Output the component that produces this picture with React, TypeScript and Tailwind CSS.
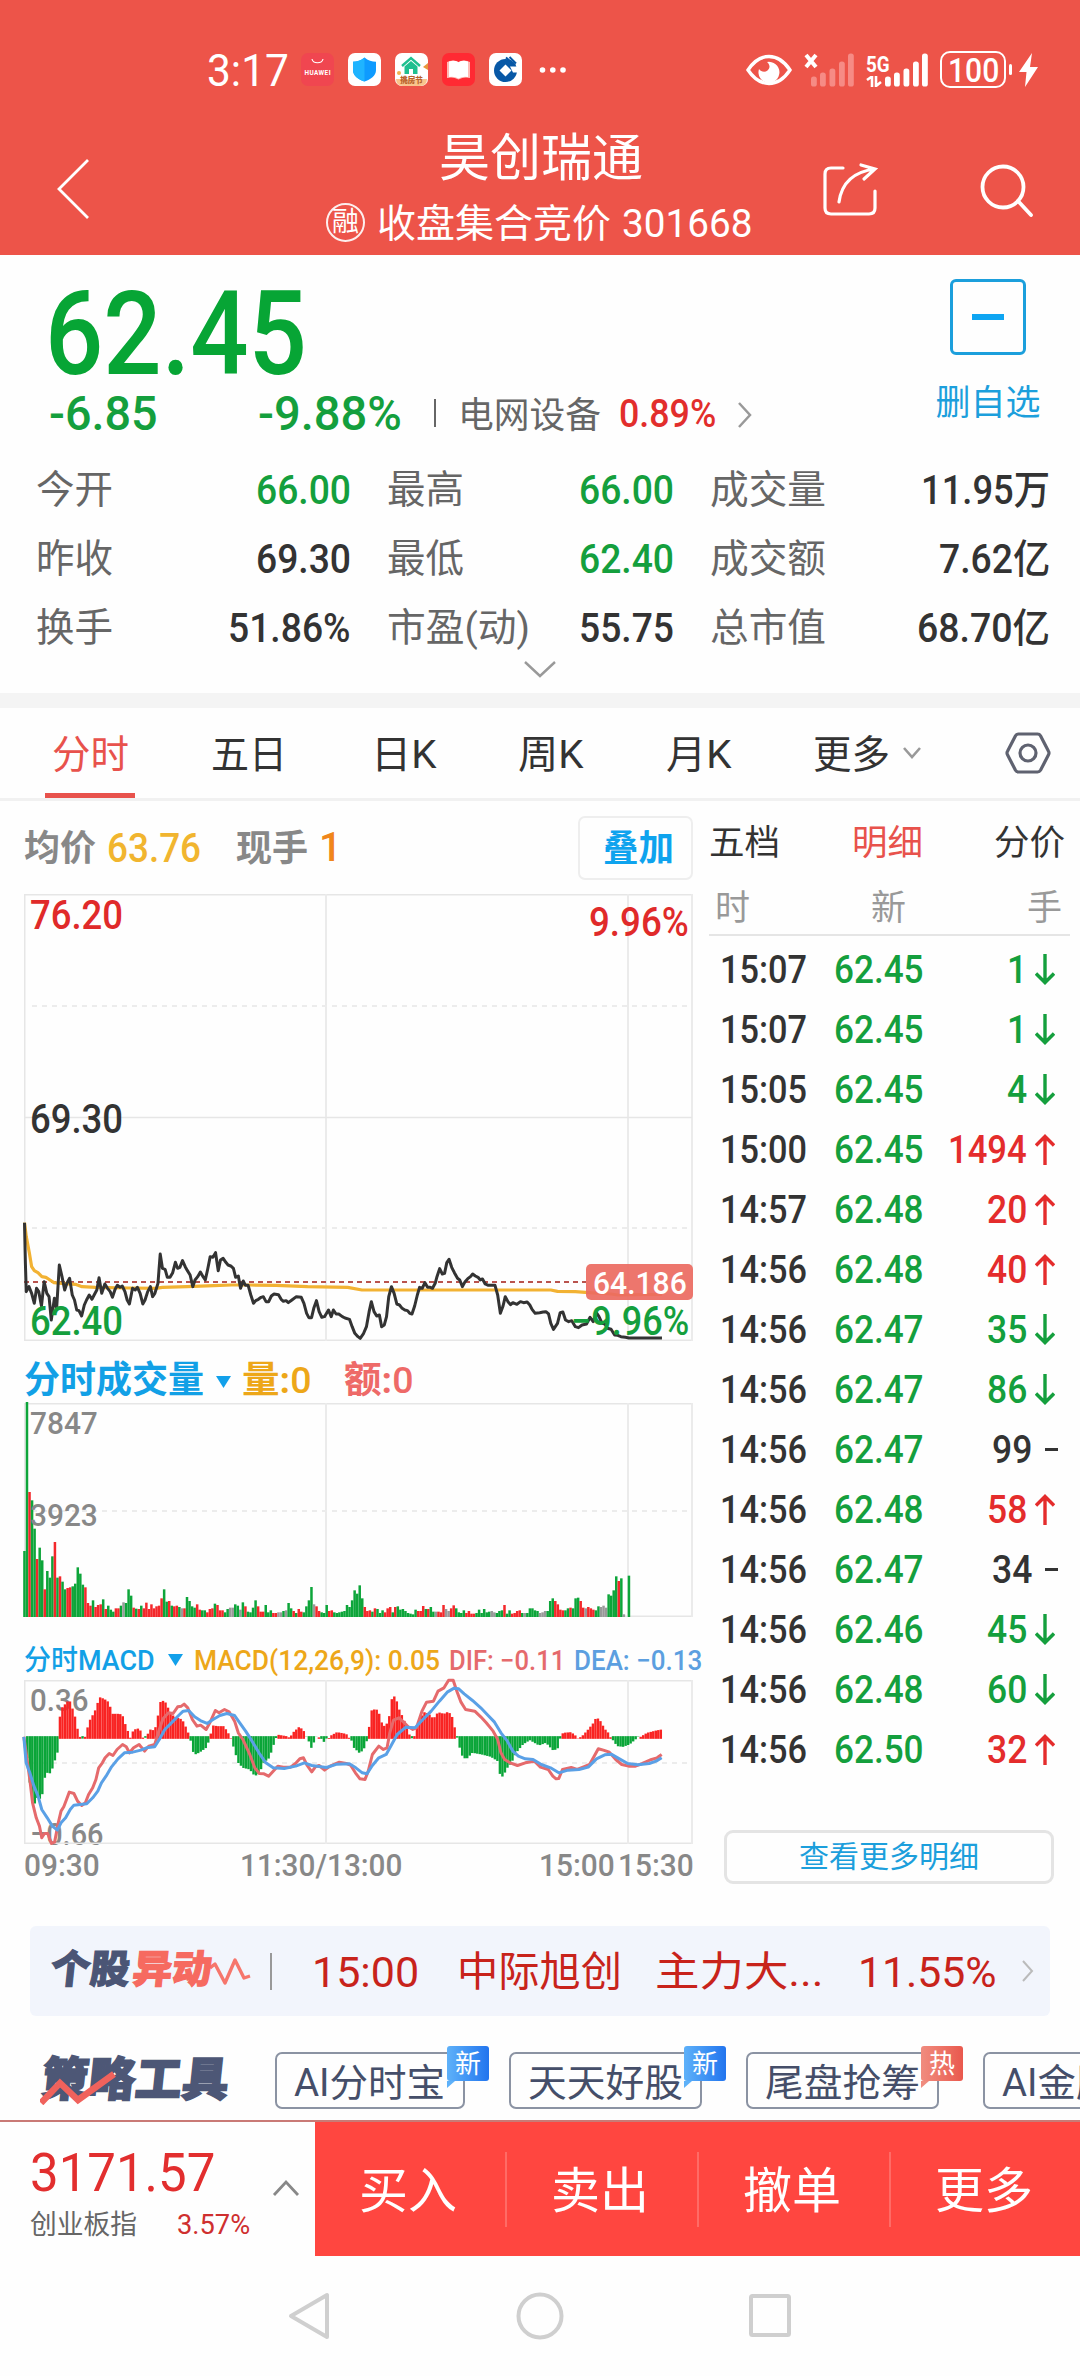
import { useLayoutEffect, useRef, useState } from "react";
import type { ReactNode } from "react";
import clsx from "clsx";

interface FitProps {
  children: ReactNode;
  className?: string;
}

// Squeezes or stretches a single line of text to the width of its box
function Fit({ children, className }: FitProps) {
  const box = useRef<HTMLSpanElement>(null);
  const text = useRef<HTMLSpanElement>(null);
  const [scale, setScale] = useState(1);

  useLayoutEffect(() => {
    if (box.current && text.current) {
      setScale(box.current.clientWidth / text.current.offsetWidth);
    }
  }, [children]);

  return (
    <span ref={box} className={clsx("block shrink-0 whitespace-nowrap leading-none", className)}>
      <span ref={text} className="inline-block origin-left translate-y-px" style={{ transform: `scaleX(${scale})` }}>
        {children}
      </span>
    </span>
  );
}

const SIGNAL = [
  { x: 0, h: 10 },
  { x: 9, h: 14 },
  { x: 18.5, h: 18 },
  { x: 28, h: 25 },
  { x: 37, h: 33 },
];

function SignalBars({ className }: { className?: string }) {
  return (
    <svg width="43" height="34" viewBox="0 0 43 34" className={className}>
      {SIGNAL.map((b) => (
        <rect key={b.x} x={b.x} y={33.5 - b.h} width="5.8" height={b.h} rx="2.6" fill="currentColor" />
      ))}
    </svg>
  );
}

function StatusBar() {
  return (
    <div className="flex h-[120px] items-center pt-[19px] pl-[207px]">
      <Fit className="w-[82px] text-[44px]">3:17</Fit>
      <div className="ml-3 flex gap-[14px]">
        <svg width="33" height="33" viewBox="0 0 33 33">
          <rect width="33" height="33" rx="7" fill="#f04650" />
          <path d="M11 6c1 5 10 5 11 0" fill="none" stroke="#fff" strokeWidth="1.2" />
          <text x="16.5" y="21.5" fontSize="6.4" fontWeight="700" fill="#fff" textAnchor="middle" textLength="26">
            HUAWEI
          </text>
        </svg>
        <svg width="33" height="33" viewBox="0 0 33 33">
          <rect width="33" height="33" rx="7" fill="#fff" />
          <path d="M16.5 4.500c3.500 3 7.500 4 11.500 4.300v8.200c0 6-5.500 9.500-11.500 11.500C10.500 26.500 5 23 5 17V8.800c4-.3 8-1.300 11.500-4.300z" fill="#0e9bff" />
          <path d="M16.500 4.500c-3.500 3-7.500 4-11.500 4.300V17c0 6 5.500 9.500 11.500 11.500z" fill="#1fb4ff" />
        </svg>
        <svg width="33" height="33" viewBox="0 0 33 33">
          <rect width="33" height="33" rx="7" fill="#fff" />
          <path d="M1 26h31q0 7-7 7H8q-7 0-7-7z" fill="#f9c48c" />
          <circle cx="4" cy="20" r="2" fill="#f2b24f" />
          <path d="M28 14l5-4v7z" fill="#e9973c" />
          <path d="M7 13l9-8 9 8" fill="none" stroke="#1fbf8f" strokeWidth="2.400" />
          <path d="M9.500 13.500l6.500-5.500 6.500 5.500V21h-4.500v-5h-4v5H9.500z" fill="#1fbf8f" />
          <text x="16.500" y="29.800" fontSize="7.500" fontWeight="900" fill="#b8602a" textAnchor="middle">
            挑房节
          </text>
        </svg>
        <svg width="33" height="33" viewBox="0 0 33 33">
          <rect width="33" height="33" rx="7" fill="#ff2a33" />
          <path d="M5 9q6-3 11.500 0 5.500-3 11.500 0v16q-6-1.500-11.500 1.500Q11 23.500 5 25z" fill="#ffb9b4" />
          <path d="M7 8.500q5.500-1.800 9.500.7 4-2.500 9.500-.7V24q-5.500-1-9.500 1.500Q12.500 23 7 24z" fill="#fff" />
        </svg>
        <svg width="33" height="33" viewBox="0 0 33 33">
          <rect width="33" height="33" rx="7" fill="#fff" />
          <circle cx="16.500" cy="17.500" r="11.500" fill="#0758a6" />
          <path d="M16.500 11.500l6 6-6 6-6-6z" fill="#fff" />
          <path d="M21 13.500h9v6h-6z" fill="#fff" />
          <path d="M17 4.500l9 8M20.500 4l6.500 6.500" stroke="#0758a6" strokeWidth="2" />
        </svg>
      </div>
      <svg className="ml-[17px]" width="28" height="8" viewBox="0 0 28 8" fill="#fff">
        <circle cx="3.500" cy="4" r="2.800" />
        <circle cx="13.800" cy="4" r="2.800" />
        <circle cx="24" cy="4" r="2.800" />
      </svg>
      <svg className="ml-[179px]" width="46" height="32" viewBox="0 0 46 32">
        <path d="M2 16Q11 2.500 23 2.500T44 16Q35 29.500 23 29.500T2 16z" fill="none" stroke="#fff" strokeWidth="3.400" />
        <path d="M21 8a10.500 10.500 0 1 1-8 7c2 3 6 3.500 8.500 1.500 3-2.500 2.500-6-.5-8.500z" fill="#fff" />
      </svg>
      <div className="ml-3 flex h-[34px] w-[50px]">
        <svg className="-mr-[7px] shrink-0" width="14" height="16" viewBox="0 0 14 16">
          <path d="M2 2l10 12M12 2L2 14" stroke="#fff" strokeWidth="4" />
        </svg>
        <SignalBars className="shrink-0 text-[#f68b85]" />
      </div>
      <div className="ml-3 flex h-[34px]">
        <div className="flex w-[19px] flex-col justify-between">
          <Fit className="w-[24px] text-[22px] font-bold">5G</Fit>
          <svg width="17" height="11" viewBox="0 0 17 11" stroke="#fff" strokeWidth="2.600" fill="none">
            <path d="M1 4l5-3.500V11M10 0v10l5-4" />
          </svg>
        </div>
        <SignalBars className="text-white" />
      </div>
      <div className="ml-3 flex h-[37px] w-[66px] items-center justify-center rounded-[10px] border-[2.500px] border-white">
        <Fit className="w-[51px] text-[33px] font-medium">100</Fit>
      </div>
      <div className="ml-[3px] h-[11px] w-[3px] rounded-full bg-white" />
      <svg className="ml-[7px]" width="19" height="34" viewBox="0 0 19 34">
        <path d="M13 0L0 19h7.500L6 34l13-20h-8z" fill="#fff" />
      </svg>
    </div>
  );
}

function Header() {
  return (
    <header className="h-[255px] bg-[#ed5449] text-white">
      <StatusBar />
      <div className="flex h-[135px]">
        <svg className="mt-[38px] ml-[56px] shrink-0" width="34" height="62" viewBox="0 0 34 62">
          <path d="M32 2L3 31l29 29" fill="none" stroke="#fff" strokeWidth="2.800" />
        </svg>
        <div className="ml-[236px] w-[430px] shrink-0">
          <Fit className="mt-[12px] ml-[113px] w-[204px] text-[51px]">昊创瑞通</Fit>
          <div className="mt-[19px] flex h-[40px] items-center">
            <div className="flex size-[39px] shrink-0 items-center justify-center rounded-full border-2 border-white/90">
              <span className="text-[27px] leading-none">融</span>
            </div>
            <Fit className="mt-[2px] ml-[12px] w-[234px] text-[39px]">收盘集合竞价</Fit>
            <Fit className="mt-[2px] ml-[11px] w-[131px] text-[39px]">301668</Fit>
          </div>
        </div>
        <svg className="mt-[42px] ml-[67px] shrink-0" width="56" height="56" viewBox="0 0 56 56" fill="none" stroke="#fff" strokeWidth="3.200" strokeLinecap="round">
          <path d="M20 6H8q-6 0-6 6v34q0 6 6 6h38q6 0 6-6V29" />
          <path d="M16 40Q20 11 52 7M38 3l14 4-11 10" />
        </svg>
        <svg className="mt-[42px] ml-[101px] shrink-0" width="54" height="56" viewBox="0 0 54 56" fill="none" stroke="#fff" strokeWidth="3.800" strokeLinecap="round">
          <circle cx="23" cy="25" r="20.500" />
          <path d="M38 39l13 14" />
        </svg>
      </div>
    </header>
  );
}

interface Stat {
  label: string;
  labelWidth: string;
  value: string;
  valueWidth: string;
  down?: boolean;
}

const STATS: Stat[][] = [
  [
    { label: "今开", labelWidth: "w-[77px]", value: "66.00", valueWidth: "w-[95px]", down: true },
    { label: "最高", labelWidth: "w-[77px]", value: "66.00", valueWidth: "w-[95px]", down: true },
    { label: "成交量", labelWidth: "w-[116px]", value: "11.95万", valueWidth: "w-[129px]" },
  ],
  [
    { label: "昨收", labelWidth: "w-[77px]", value: "69.30", valueWidth: "w-[95px]" },
    { label: "最低", labelWidth: "w-[77px]", value: "62.40", valueWidth: "w-[95px]", down: true },
    { label: "成交额", labelWidth: "w-[116px]", value: "7.62亿", valueWidth: "w-[111px]" },
  ],
  [
    { label: "换手", labelWidth: "w-[77px]", value: "51.86%", valueWidth: "w-[123px]" },
    { label: "市盈(动)", labelWidth: "w-[143px]", value: "55.75", valueWidth: "w-[95px]" },
    { label: "总市值", labelWidth: "w-[116px]", value: "68.70亿", valueWidth: "w-[133px]" },
  ],
];

function Quote() {
  return (
    <section className="h-[438px]">
      <div className="flex h-[200px]">
        <div className="w-[900px]">
          <Fit className="mt-[20px] ml-[45px] w-[262px] text-[116px] font-medium text-[#07a535]">62.45</Fit>
          <div className="-mt-[3px] flex h-[50px] items-center">
            <Fit className="ml-[49px] w-[109px] text-[48px] font-medium text-[#149f3d]">-6.85</Fit>
            <Fit className="ml-[100px] w-[144px] text-[48px] font-medium text-[#149f3d]">-9.88%</Fit>
            <div className="ml-[32px] h-[28px] w-[2px] bg-[#666]" />
            <Fit className="mt-[3px] ml-[22px] w-[143px] text-[36px] text-[#666]">电网设备</Fit>
            <Fit className="ml-[18px] w-[97px] text-[38px] font-medium text-[#e22e2c]">0.89%</Fit>
            <svg className="mt-[4px] ml-[21px]" width="16" height="28" viewBox="0 0 16 28">
              <path d="M2 2l11 12L2 26" fill="none" stroke="#999" strokeWidth="2.500" />
            </svg>
          </div>
        </div>
        <div className="ml-[35px] flex w-[106px] flex-col items-center text-[#1c9fdc]">
          <div className="mt-[24px] flex size-[76px] items-center justify-center rounded-[6px] border-[3px] border-[#1c9fdc]">
            <div className="h-[6px] w-[32px] bg-[#0ea5f2]" />
          </div>
          <Fit className="mt-[30px] w-[105px] text-[35px]">删自选</Fit>
        </div>
      </div>
      <div className="flex flex-col">
        {STATS.map((row, i) => (
          <div key={i} className="flex h-[69px] items-center text-[40px]">
            {row.map((s, j) => (
              <div
                key={s.label}
                className={clsx(
                  "flex items-center justify-between",
                  j === 0 && "ml-[36px] w-[315px]",
                  j === 1 && "ml-[36px] w-[287px]",
                  j === 2 && "ml-[36px] w-[340px]",
                )}
              >
                <Fit className={clsx("text-[39px] text-[#666]", s.labelWidth)}>{s.label}</Fit>
                <Fit className={clsx(s.valueWidth, s.down ? "font-medium text-[#149f3d]" : "font-medium text-[#333]")}>{s.value}</Fit>
              </div>
            ))}
          </div>
        ))}
      </div>
      <svg className="-mt-[2px] mx-auto" width="34" height="18" viewBox="0 0 34 18">
        <path d="M2 2l15 14L32 2" fill="none" stroke="#999" strokeWidth="2.400" />
      </svg>
    </section>
  );
}

function ChartTabs() {
  return (
    <nav className="flex h-[93px] items-center border-b-[3px] border-[#f1f1f1] text-[39px] text-[#333]">
      <div className="ml-[45px] flex h-[90px] w-[90px] shrink-0 items-center justify-center border-b-[5px] border-[#e8524c] pt-[7px] text-[#e8524c]">
        <Fit className="w-[77px]">分时</Fit>
      </div>
      <Fit className="mt-[2px] ml-[76px] w-[76px]">五日</Fit>
      <Fit className="mt-[2px] ml-[84px] w-[65px]">日K</Fit>
      <Fit className="mt-[2px] ml-[82px] w-[65px]">周K</Fit>
      <Fit className="mt-[2px] ml-[83px] w-[65px]">月K</Fit>
      <Fit className="mt-[2px] ml-[82px] w-[77px]">更多</Fit>
      <svg className="ml-[12px]" width="20" height="14" viewBox="0 0 20 14">
        <path d="M2 2l8 9 8-9" fill="none" stroke="#999" strokeWidth="2.600" />
      </svg>
      <svg className="ml-[83px]" width="46" height="44" viewBox="0 0 46 44" fill="none" stroke="#5f6270" strokeWidth="3.200" strokeLinejoin="round">
        <path d="M13.500 3h19q2 0 3 1.700l8 15.500q1 1.800 0 3.600l-8 15.500q-1 1.700-3 1.700h-19q-2 0-3-1.700l-8-15.500q-1-1.800 0-3.600l8-15.500q1-1.700 3-1.700z" />
        <circle cx="23" cy="22" r="8" />
      </svg>
    </nav>
  );
}

// Traces are plotted in chart units and scaled into the panel by the group around them
const PRICE =
  "56,128 58,250 60,335 66,320 72,340 78,370 83,325 88,335 94,378 100,305 106,340 111,350 116,420 123,355 128,385 134,255 140,290 146,330 151,310 157,295 163,345 168,360 173,390 178,392 184,408 190,375 195,360 201,345 207,358 212,345 218,330 223,293 229,340 236,312 242,325 248,335 253,352 259,328 264,316 270,322 275,318 281,335 286,360 291,372 298,325 304,330 309,322 315,340 321,372 326,360 332,335 338,320 343,350 348,340 355,310 360,222 365,265 371,268 376,292 382,292 388,278 394,247 399,265 404,262 410,242 416,260 421,272 427,285 433,320 438,300 444,290 450,276 456,290 461,300 466,270 472,230 478,232 484,218 490,272 495,240 501,235 507,247 512,255 518,258 524,265 529,292 535,288 540,325 546,303 551,316 557,316 563,345 569,370 574,362 580,358 586,352 591,350 597,365 603,365 609,348 615,342 625,344 631,358 636,364 642,362 647,368 655,360 665,350 676,352 682,370 688,400 693,413 699,413 704,385 710,362 716,395 722,412 728,410 737,390 743,410 748,390 754,402 760,402 768,410 774,414 784,418 790,440 796,460 803,470 808,475 815,462 822,440 828,395 833,365 839,395 845,408 851,405 856,440 862,435 867,410 872,350 878,320 884,340 890,372 896,375 902,385 908,390 914,392 919,400 924,402 930,378 936,345 941,322 947,325 953,308 959,322 965,322 970,325 976,310 980,290 986,266 992,282 997,280 1002,248 1007,238 1013,262 1019,278 1026,295 1031,300 1037,320 1043,305 1049,296 1055,290 1060,282 1066,288 1072,292 1077,300 1082,297 1088,312 1095,316 1110,316 1116,345 1122,400 1128,378 1133,350 1139,365 1145,374 1150,368 1159,373 1167,365 1174,368 1182,366 1188,375 1193,388 1200,400 1210,398 1218,396 1224,395 1230,402 1235,430 1241,448 1250,430 1256,398 1262,396 1268,420 1275,425 1282,422 1290,440 1297,443 1305,435 1315,432 1323,412 1330,425 1337,398 1343,410 1350,430 1356,432 1362,445 1370,448 1378,465 1385,466 1392,470 1402,472 1410,474 1484,474";

const AVERAGE =
  "56,128 60,170 67,220 72,260 78,272 86,278 95,290 104,292 113,300 122,308 140,310 170,313 185,320 215,322 290,324 350,325 365,322 420,320 480,317 520,315 560,315 620,316 690,320 780,322 812,330 1000,330 1235,330 1250,334 1290,335 1320,338 1370,342 1385,345 1484,343";

const DIF =
  "53,322 58,370 66,450 72,520 80,565 87,590 92,625 98,612 105,612 113,642 120,638 128,580 134,545 140,532 146,510 152,488 162,492 170,515 179,528 187,520 194,495 203,475 210,450 216,415 224,400 230,385 239,372 247,378 256,360 268,345 276,352 283,370 292,355 304,345 316,365 325,350 338,345 348,300 356,268 368,250 378,252 388,232 396,230 402,224 410,235 420,270 430,290 438,287 450,300 458,280 470,243 478,250 490,240 500,247 512,275 520,310 530,330 545,375 556,415 566,432 576,433 586,440 596,425 606,410 618,413 634,413 646,400 654,388 662,385 670,408 680,427 688,412 696,408 708,422 720,410 740,398 755,402 765,408 775,430 785,448 796,450 803,425 812,375 826,350 836,360 844,355 850,310 858,272 870,265 880,278 890,292 900,300 908,295 920,245 930,218 945,215 955,185 968,175 978,152 988,152 996,185 1005,218 1015,240 1035,245 1048,262 1060,280 1075,305 1085,330 1092,370 1100,390 1112,400 1128,408 1145,400 1165,395 1178,413 1195,420 1205,440 1212,448 1218,447 1226,420 1245,414 1258,420 1272,412 1285,405 1295,380 1304,358 1315,362 1328,368 1342,390 1355,405 1370,410 1385,410 1400,402 1420,390 1432,385 1442,375";

const DEA =
  "53,322 58,400 66,430 75,470 84,500 92,540 104,565 115,590 126,602 134,580 144,565 154,540 162,527 190,523 203,505 214,485 222,460 232,440 244,412 258,388 272,370 290,368 308,362 320,355 338,352 348,330 360,300 376,278 390,258 400,245 412,243 425,262 440,275 452,282 465,270 480,258 495,252 512,258 522,278 536,305 550,335 565,370 580,400 596,415 620,417 645,410 664,400 680,408 712,414 735,404 762,403 776,415 790,430 800,433 812,408 826,385 842,375 852,350 866,315 885,293 905,295 922,270 940,245 958,215 975,188 990,176 1000,178 1012,193 1030,213 1048,235 1062,255 1078,278 1092,310 1106,335 1118,365 1130,380 1145,388 1162,390 1180,405 1200,415 1218,430 1238,422 1262,420 1282,413 1300,388 1318,376 1332,374 1350,388 1368,402 1390,406 1415,402 1430,395 1442,385";

// One entry per minute: g = falling, r = rising, n = unchanged, followed by the bar height
const VOLUME =
  "g198 g645 r375 g350 g265 r174 g208 g170 r83 g138 g118 g182 r225 g118 r122 g106 g83 r87 r89 g92 g100 g149 g130 g97 r89 r42 r34 g50 r30 r36 r38 g53 r24 g34 g22 g16 r26 r26 g34 n44 g42 g83 g64 r28 g25 r24 g34 r26 r43 r24 r38 r26 r32 r34 r56 g83 g46 r48 g34 r32 r34 g30 n26 r26 g60 g48 g32 g28 r38 r22 g20 g20 r14 r24 r26 g40 r36 r20 r20 g14 g24 n28 n28 g38 g34 n22 g44 r32 g16 g14 g28 g50 r32 r16 r16 g36 g14 g20 r12 r12 n14 n14 g18 n20 g42 g26 r18 g12 r24 r16 g14 g32 g50 g90 n38 r32 r18 g14 g12 g36 r18 r20 g14 g12 g14 g16 g18 g36 g30 g50 g80 g70 g95 g56 r30 r18 r20 g16 r26 g24 g12 g20 r14 r26 r30 g14 r30 g32 g22 g24 g18 g12 g10 g8 g22 r18 r18 r33 g24 r24 g30 g16 n16 r16 r14 r36 n24 n18 r26 r35 g26 g14 g12 g20 r12 r18 r10 r10 g12 g22 g12 g24 g14 g16 n18 n14 g12 g18 g20 r36 g10 g20 r10 r12 r18 r20 g12 n12 g12 g26 g26 g20 g18 n12 n14 n18 g18 g48 g56 r48 r38 r22 r20 g20 g26 r28 g26 g56 g58 r48 r28 n26 r30 r26 r22 g20 g32 n30 n34 n28 g68 g64 g80 g122 r108 g116 n8 n0 g124";

const VOLUME_COLORS: Record<string, string> = { g: "#0da53a", r: "#f3282b", n: "#999999" };

const volumeBars = VOLUME.split(" ").map((bar, i, all) => ({
  x: (i * 604.5) / (all.length - 1) - 0.8,
  h: Number(bar.slice(1)) / 3,
  color: VOLUME_COLORS[bar[0]],
}));

// MACD histogram outline as [x, height above the zero line]
const HISTOGRAM = [
  [55, 0], [60, -60], [66, -140], [72, -200], [76, -205], [82, -185], [92, -190], [97, -130], [104, -110], [112, -112], [120, -75], [126, -55],
  [129, 40], [134, 90], [152, 118], [158, 95], [164, 70], [170, 30], [175, 8], [179, -12], [184, 0], [188, 10], [192, 35], [198, 60],
  [207, 80], [218, 125], [228, 120], [238, 110], [246, 75], [262, 75], [268, 70], [275, 40], [281, 18], [283, -6], [288, 18], [294, 28],
  [305, 32], [312, 5], [316, -12], [322, 12], [328, 28], [338, 25], [344, 60], [350, 110], [358, 115], [364, 105], [372, 75], [384, 65],
  [398, 58], [406, 35], [412, 15], [415, -2], [420, -45], [428, -55], [440, -45], [450, -35], [456, -15], [459, 10], [465, 40], [475, 38],
  [488, 38], [495, 25], [502, 8], [505, -2], [510, -35], [520, -80], [530, -95], [545, -100], [556, -120], [566, -112], [575, -80], [588, -65],
  [596, -30], [604, 0], [608, 12], [625, 8], [632, 3], [640, 20], [652, 35], [662, 28], [666, 2], [670, -3], [680, -38], [688, -5],
  [694, 8], [700, -6], [706, -18], [716, 0], [722, 10], [735, 20], [755, 15], [764, -2], [772, -35], [785, -52], [795, -35], [802, -5],
  [805, 35], [810, 85], [820, 90], [826, 80], [832, 50], [840, 35], [848, 60], [855, 125], [862, 128], [870, 90], [880, 60], [890, 25],
  [896, -2], [900, -10], [906, 20], [915, 60], [925, 80], [935, 75], [945, 60], [955, 80], [968, 75], [978, 82], [986, 65], [992, 30],
  [996, 0], [1000, -25], [1008, -60], [1016, -70], [1030, -50], [1050, -55], [1070, -62], [1085, -75], [1090, -115], [1096, -122],
  [1106, -95], [1115, -80], [1125, -50], [1140, -25], [1155, -12], [1175, -28], [1190, -20], [1205, -42], [1215, -40], [1222, -3],
  [1227, 18], [1245, 20], [1256, 8], [1260, 0], [1270, 10], [1280, 25], [1292, 45], [1300, 65], [1308, 55], [1318, 30], [1328, 15],
  [1334, -8], [1345, -30], [1358, -32], [1372, -25], [1385, -10], [1395, 5], [1410, 18], [1430, 25], [1442, 28],
];

function heightAt(x: number) {
  const i = HISTOGRAM.findIndex((p) => p[0] >= x);
  if (i <= 0) return 0;
  const [x0, h0] = HISTOGRAM[i - 1];
  const [x1, h1] = HISTOGRAM[i];
  return h0 + ((h1 - h0) * (x - x0)) / (x1 - x0);
}

const histogramBars = Array.from({ length: 254 }, (_, i) => {
  const x = 55 + i * 5.475;
  return { x, h: heightAt(x) };
});

interface GridProps {
  height: number;
  mid?: number;
  dashes: number[];
}

function Grid({ height, mid, dashes }: GridProps) {
  return (
    <g fill="none" stroke="#e6e6e6" strokeWidth="1.500">
      <rect x="0.750" y="0.750" width="667.500" height={height - 1.5} />
      <path d={`M302 0V${height}M604 0V${height}M668 0V${height}`} strokeWidth="2" stroke="#ebebeb" />
      {mid && <path d={`M0 ${mid}H668`} />}
      {dashes.map((y) => (
        <path key={y} d={`M8 ${y}H666`} strokeDasharray="5 5" strokeWidth="2" stroke="#ececec" />
      ))}
    </g>
  );
}

function PriceChart() {
  return (
    <div className="relative mt-[15px] h-[447px] w-[669px] text-[40px] font-medium">
      <svg width="669" height="447" viewBox="0 0 669 447" className="block overflow-visible">
        <Grid height={447} mid={223.5} dashes={[112, 334]} />
        <path d="M0 388H562" stroke="#b9534d" strokeWidth="2.200" strokeDasharray="5 4" />
        <g transform="translate(-24.500 286) scale(0.4464 0.3333)" fill="none" strokeLinejoin="round">
          <polyline points={AVERAGE} stroke="#f2b233" strokeWidth="3.200" vectorEffect="non-scaling-stroke" />
          <polyline points={PRICE} stroke="#333" strokeWidth="3" vectorEffect="non-scaling-stroke" />
        </g>
      </svg>
      <Fit className="absolute top-[1px] left-[6px] w-[93px] text-[#e02a2a]">76.20</Fit>
      <Fit className="absolute top-[8px] left-[565px] w-[100px] text-[#e02a2a]">9.96%</Fit>
      <Fit className="absolute top-[205px] left-[6px] w-[93px] text-[#333]">69.30</Fit>
      <Fit className="absolute top-[407px] left-[6px] w-[93px] text-[#149f3d]">62.40</Fit>
      <Fit className="absolute top-[407px] left-[547px] w-[118px] text-[#149f3d]">−9.96%</Fit>
      <div className="absolute top-[370px] left-[562px] flex h-[36px] w-[107px] items-center justify-center rounded-[5px] bg-[#ec6a61]/92 text-[31px] text-white">
        <Fit className="w-[94px]">64.186</Fit>
      </div>
    </div>
  );
}

function Caret() {
  return (
    <svg width="15" height="12" viewBox="0 0 15 12">
      <path d="M0 0h15L7.500 12z" fill="#12a0ea" />
    </svg>
  );
}

function VolumeChart() {
  return (
    <>
      <div className="flex h-[62px] items-center pt-[15px] text-[37px] font-bold">
        <Fit className="w-[180px] text-[#12a0e6]">分时成交量</Fit>
        <div className="mt-[4px] ml-[12px]">
          <Caret />
        </div>
        <Fit className="ml-[11px] w-[69px] text-[#eda719]">
          量:<span className="font-medium">0</span>
        </Fit>
        <Fit className="ml-[33px] w-[69px] text-[#ee6a68]">
          额:<span className="font-medium">0</span>
        </Fit>
      </div>
      <div className="relative h-[214px] w-[669px] text-[32px] font-medium text-[#888]">
        <svg width="669" height="214" viewBox="0 0 669 214" className="block overflow-visible">
          <Grid height={214} dashes={[108]} />
          {volumeBars.map((b) => (
            <rect key={b.x} x={b.x} y={214 - b.h} width="2.500" height={b.h} fill={b.color} />
          ))}
        </svg>
        <Fit className="absolute top-[3px] left-[6px] w-[68px]">7847</Fit>
        <Fit className="absolute top-[95px] left-[6px] w-[68px]">3923</Fit>
      </div>
    </>
  );
}

function MacdChart() {
  return (
    <>
      <div className="flex h-[63px] w-[690px] items-center pt-[23px] text-[28px] font-medium">
        <Fit className="w-[131px] text-[#12a0e6]">分时MACD</Fit>
        <div className="ml-[13px]">
          <Caret />
        </div>
        <Fit className="ml-[11px] w-[246px] text-[#eda719]">MACD(12,26,9): 0.05</Fit>
        <Fit className="ml-[9px] w-[116px] text-[#e56a6c]">DIF: −0.11</Fit>
        <Fit className="ml-[9px] w-[128px] text-[#5c9fe0]">DEA: −0.13</Fit>
      </div>
      <div className="relative h-[164px] w-[669px] text-[32px] font-medium text-[#888]">
        <Fit className="absolute top-[3px] left-[6px] w-[58px]">0.36</Fit>
        <Fit className="absolute top-[137px] left-[6px] w-[73px]">−0.66</Fit>
        <svg width="669" height="164" viewBox="0 0 669 164" className="relative block overflow-visible">
          <Grid height={164} dashes={[83]} />
          <g transform="translate(-24.500 -50.500) scale(0.4592 0.3333)" fill="none" strokeLinejoin="round">
            {histogramBars.map((b) => (
              <rect
                key={b.x}
                x={b.x - 2.7}
                y={b.h > 0 ? 328 - b.h : 320}
                width="5.300"
                height={Math.abs(b.h)}
                fill={b.h > 0 ? "#f92322" : "#0aa538"}
              />
            ))}
            <polyline points={DIF} stroke="#e56a6c" strokeWidth="3" vectorEffect="non-scaling-stroke" />
            <polyline points={DEA} stroke="#5aa0e6" strokeWidth="3" vectorEffect="non-scaling-stroke" />
          </g>
        </svg>
      </div>
      <div className="flex h-[40px] items-center text-[31px] font-medium text-[#888]">
        <Fit className="w-[76px]">09:30</Fit>
        <Fit className="ml-[140px] w-[162px]">11:30/13:00</Fit>
        <Fit className="ml-[137px] w-[76px]">15:00</Fit>
        <Fit className="ml-[3px] w-[76px]">15:30</Fit>
      </div>
    </>
  );
}

interface Trade {
  time: string;
  price: string;
  volume: string;
  side: "up" | "down" | "flat";
}

const TRADES: Trade[] = [
  { time: "15:07", price: "62.45", volume: "1", side: "down" },
  { time: "15:07", price: "62.45", volume: "1", side: "down" },
  { time: "15:05", price: "62.45", volume: "4", side: "down" },
  { time: "15:00", price: "62.45", volume: "1494", side: "up" },
  { time: "14:57", price: "62.48", volume: "20", side: "up" },
  { time: "14:56", price: "62.48", volume: "40", side: "up" },
  { time: "14:56", price: "62.47", volume: "35", side: "down" },
  { time: "14:56", price: "62.47", volume: "86", side: "down" },
  { time: "14:56", price: "62.47", volume: "99", side: "flat" },
  { time: "14:56", price: "62.48", volume: "58", side: "up" },
  { time: "14:56", price: "62.47", volume: "34", side: "flat" },
  { time: "14:56", price: "62.46", volume: "45", side: "down" },
  { time: "14:56", price: "62.48", volume: "60", side: "down" },
  { time: "14:56", price: "62.50", volume: "32", side: "up" },
];

const VOLUME_WIDTHS = ["w-0", "w-[20px]", "w-[40px]", "w-[60px]", "w-[79px]"];

function TradeRow({ trade }: { trade: Trade }) {
  const { time, price, volume, side } = trade;
  return (
    <div className="flex h-[60px] items-center text-[39px] font-medium">
      <Fit className="ml-[11px] w-[87px] text-[#333]">{time}</Fit>
      <Fit className="ml-[27px] w-[90px] text-[#149f3d]">{price}</Fit>
      <div
        className={clsx(
          "ml-auto flex items-center",
          side === "up" && "mr-[15px] text-[#e42c2c]",
          side === "down" && "mr-[15px] text-[#149f3d]",
          side === "flat" && "mr-[12px] text-[#333]",
        )}
      >
        <Fit className={VOLUME_WIDTHS[volume.length]}>{volume}</Fit>
        {side === "flat" ? (
          <div className="ml-[13px] h-[3px] w-[13px] bg-[#333]" />
        ) : (
          <svg
            className={clsx("ml-[8px]", side === "up" && "rotate-180")}
            width="20"
            height="31"
            viewBox="0 0 20 31"
            fill="none"
            stroke="currentColor"
            strokeWidth="3.400"
          >
            <path d="M10 0v28M1 19.500l9 9 9-9" />
          </svg>
        )}
      </div>
    </div>
  );
}

function TradePanel() {
  return (
    <aside className="w-[361px] shrink-0 text-[35px]">
      <div className="mt-[22px] flex h-[38px] items-center text-[#333]">
        <Fit className="w-[71px]">五档</Fit>
        <Fit className="ml-[72px] w-[71px] text-[#e8524c]">明细</Fit>
        <Fit className="ml-[71px] w-[71px]">分价</Fit>
      </div>
      <div className="mt-[28px] flex h-[38px] items-center text-[#999]">
        <span className="ml-[6px] leading-none">时</span>
        <span className="ml-[121px] leading-none">新</span>
        <span className="ml-[121px] leading-none">手</span>
      </div>
      <div className="mt-[7px] border-t-2 border-[#e5e5e5] pt-[3px]">
        {TRADES.map((t, i) => (
          <TradeRow key={i} trade={t} />
        ))}
      </div>
      <button className="mt-[51px] ml-[15px] flex h-[54px] w-[330px] items-center justify-center rounded-[9px] border-[3px] border-[#e4e4e4] text-[30px] leading-none text-[#1c9fdc]">
        查看更多明细
      </button>
    </aside>
  );
}

function AlertStrip() {
  return (
    <div className="mx-[30px] mt-[34px] flex h-[90px] items-center rounded-[6px] bg-[#f2f5fc] text-[41px] text-[#c8231b]">
      <div className="mb-[3px] ml-[21px] flex -skew-x-6 text-[39px] font-black">
        <Fit className="w-[79px] text-[#4b5575] [-webkit-text-stroke:1.2px]">个股</Fit>
        <Fit className="ml-[3px] w-[79px] text-[#f66a60] [-webkit-text-stroke:1.2px]">异动</Fit>
      </div>
      <svg className="-ml-[2px]" width="42" height="32" viewBox="0 0 42 32" fill="none" stroke="#f6766c" strokeWidth="3.400" strokeLinejoin="round">
        <path d="M0 13l5-4 10 19L25 5l9 18 6-2" />
      </svg>
      <div className="ml-[18px] h-[37px] w-[2px] bg-[#999]" />
      <Fit className="ml-[40px] w-[107px] text-[43px]">15:00</Fit>
      <Fit className="ml-[38px] w-[165px]">中际旭创</Fit>
      <Fit className="ml-[33px] w-[168px]">主力大...</Fit>
      <Fit className="ml-[35px] w-[139px] text-[43px]">11.55%</Fit>
      <svg className="ml-[24px]" width="14" height="24" viewBox="0 0 14 24">
        <path d="M2 2l9 10-9 10" fill="none" stroke="#bbb" strokeWidth="2" />
      </svg>
    </div>
  );
}

interface Tool {
  label: string;
  tag?: string;
  hot?: boolean;
}

const TOOLS: Tool[] = [
  { label: "AI分时宝", tag: "新" },
  { label: "天天好股", tag: "新" },
  { label: "尾盘抢筹", tag: "热", hot: true },
  { label: "AI金股" },
];

const TOOL_BOXES = ["w-[190px]", "ml-[44px] w-[193px]", "ml-[44px] w-[193px]", "ml-[44px] w-[193px]"];
const TOOL_LABELS = ["w-[151px]", "w-[155px]", "w-[155px]", "w-[112px]"];

function ToolRow() {
  return (
    <div className="mt-[36px] flex h-[58px] overflow-visible pl-[42px]">
      <div className="relative mt-[3px] w-[233px] shrink-0">
        <Fit className="w-[187px] -skew-x-6 text-[47px] font-black text-[#4d5776] [-webkit-text-stroke:1.5px]">策略工具</Fit>
        <svg className="absolute top-[16px] -left-[2px]" width="82" height="34" viewBox="0 0 82 34">
          <path d="M1 32L20 12l18 17L74 3" fill="none" stroke="#f0625c" strokeWidth="6.500" />
        </svg>
      </div>
      {TOOLS.map((t, i) => (
        <div
          key={t.label}
          className={clsx("relative flex h-[57px] shrink-0 items-center rounded-[7px] border-2 border-[#8b93a3] pl-[17px] text-[38px] text-[#454e69]", TOOL_BOXES[i])}
        >
          <Fit className={clsx("mt-[2px]", TOOL_LABELS[i])}>{t.label}</Fit>
          {t.tag && (
            <div className="absolute -top-[8px] -right-[26px] h-[41px] w-[42px]">
              <div
                className={clsx(
                  "flex h-[35px] items-center justify-center rounded-[3px] bg-linear-to-r text-[26px] leading-none text-white",
                  t.hot ? "from-[#f08c7f] to-[#e9584d]" : "from-[#5eb1f9] to-[#2274ee]",
                )}
              >
                {t.tag}
              </div>
              <svg width="8" height="7" viewBox="0 0 8 7" className="block">
                <path d="M0 0h8L0 7z" fill={t.hot ? "#f08c7f" : "#5eb1f9"} />
              </svg>
            </div>
          )}
        </div>
      ))}
    </div>
  );
}

const ACTIONS = ["买入", "卖出", "撤单", "更多"];

function TradeBar() {
  return (
    <footer className="mt-[10px] flex h-[136px] border-t-2 border-[#c97a76]">
      <div className="flex w-[315px] shrink-0">
        <div className="w-[250px] pl-[30px]">
          <Fit className="mt-[23px] w-[185px] text-[54px] text-[#e22e2e]">3171.57</Fit>
          <div className="mt-[11px] flex items-center">
            <Fit className="w-[107px] text-[27px] text-[#666]">创业板指</Fit>
            <Fit className="ml-[40px] w-[73px] text-[28px] text-[#cf2f2f]">3.57%</Fit>
          </div>
        </div>
        <svg className="mt-[57px] ml-[22px]" width="28" height="18" viewBox="0 0 28 18">
          <path d="M2 16L14 3l12 13" fill="none" stroke="#888" strokeWidth="2.800" />
        </svg>
      </div>
      <div className="flex flex-1 items-center bg-[#ff4640] text-[49px] text-white">
        {ACTIONS.map((a, i) => (
          <div
            key={a}
            className={clsx("flex h-[75px] w-[192px] shrink-0 items-center pl-[44px]", i < 3 && "border-r-2 border-white/20")}
          >
            <Fit className="mt-[3px] w-[98px]">{a}</Fit>
          </div>
        ))}
      </div>
    </footer>
  );
}

function SystemNav() {
  return (
    <div className="flex h-[120px] items-center justify-center bg-[#fefefe]">
      <svg width="504" height="50" viewBox="0 0 504 50" fill="none" stroke="#cfcfcf" strokeWidth="4" strokeLinejoin="round">
        <path d="M39 4v42L3 25z" />
        <circle cx="252" cy="25" r="21.500" />
        <rect x="463" y="5" width="38" height="39" rx="1.500" />
      </svg>
    </div>
  );
}

export default function App() {
  return (
    <div className="h-[2376px] w-[1080px] overflow-hidden bg-[#fefefe] font-[Roboto,'Noto_Sans_CJK_SC',sans-serif]">
      <Header />
      <Quote />
      <div className="h-[15px] bg-[#f4f4f4]" />
      <ChartTabs />
      <main className="flex h-[1091px]">
        <div className="w-[709px] shrink-0 pl-[24px]">
          <div className="mt-[15px] flex h-[63px] items-center text-[36px] font-bold">
            <Fit className="w-[72px] text-[#888]">均价</Fit>
            <Fit className="ml-[11px] w-[94px] text-[40px] font-medium text-[#f1b52f]">63.76</Fit>
            <Fit className="ml-[35px] w-[72px] text-[#888]">现手</Fit>
            <span className="ml-[11px] text-[40px] leading-none font-medium text-[#f0861a]">1</span>
            <div className="mr-[16px] ml-auto flex h-[64px] w-[115px] items-center justify-center rounded-[7px] border-2 border-[#eee] pl-[5px]">
              <Fit className="w-[71px] text-[#0ea3ee]">叠加</Fit>
            </div>
          </div>
          <PriceChart />
          <VolumeChart />
          <MacdChart />
        </div>
        <TradePanel />
      </main>
      <AlertStrip />
      <ToolRow />
      <TradeBar />
      <SystemNav />
    </div>
  );
}
